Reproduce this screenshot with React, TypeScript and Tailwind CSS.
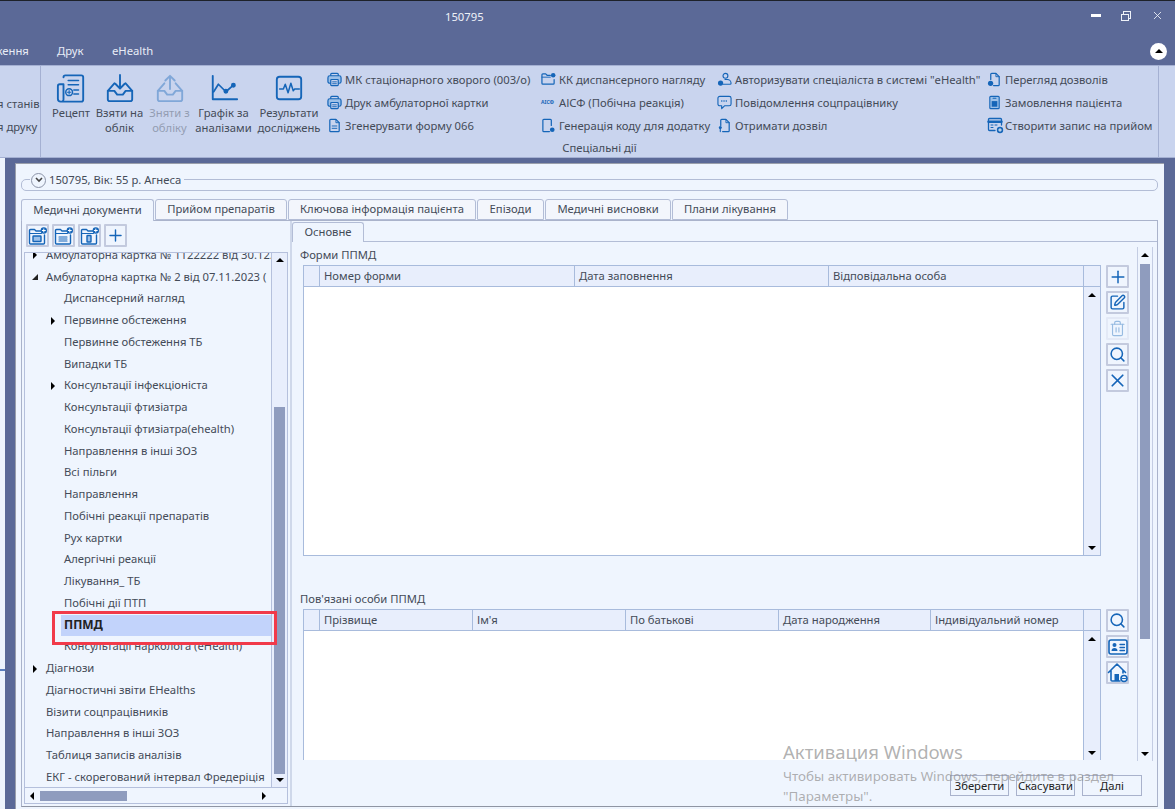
import { Plus, Search, X, Trash2, SquarePen } from 'lucide-react';
import type { ReactNode } from 'react';

const Svg = ({ size, vb = 24, children, sw = 1.6 }: { size: number; vb?: number; children: ReactNode; sw?: number }) => (
  <svg width={size} height={size} viewBox={`0 0 ${vb} ${vb}`} fill="none" stroke="currentColor" strokeWidth={sw} strokeLinecap="round" strokeLinejoin="round" className="shrink-0">
    {children}
  </svg>
);

// ribbon large icons
const RecipeIcon = () => (
  <Svg size={30} vb={32} sw={2}>
    <path d="M8 4.500a2 2 0 0 1 2-2h17a2 2 0 0 1 2 2v24a2 2 0 0 1-2 2H5a3 3 0 0 1-3-3V14a2 2 0 0 1 2-2h4v15.500a2.500 2.500 0 0 1-2.500 3" />
    <path d="M13 8h11M13 12.500h11M19 18h5M19 22.500h5" strokeWidth={1.6} />
    <circle cx="14" cy="20.500" r="3.600" strokeWidth={1.6} />
    <path d="M14 18.800v3.400M12.300 20.500h3.400" strokeWidth={1.2} />
  </Svg>
);
const InboxIcon = ({ up }: { up?: boolean }) => (
  <Svg size={30} vb={32} sw={2}>
    <path d="M10 11 3 19v9a2 2 0 0 0 2 2h22a2 2 0 0 0 2-2v-9l-7-8" />
    <path d="M3 19h7l3 4h6l3-4h7" />
    {up ? <path d="M16 17V3M11 8l5-5 5 5" /> : <path d="M16 2v14M11 11.500l5 5 5-5" />}
  </Svg>
);
const ChartIcon = () => (
  <Svg size={30} vb={32} sw={2}>
    <path d="M4 3v25h26" />
    <path d="M5 20l5-8 8 8 8-7" strokeWidth={1.8} />
    <circle cx="18" cy="19.500" r="1.600" fill="currentColor" />
    <circle cx="26" cy="13" r="1.600" fill="currentColor" />
  </Svg>
);
const MonitorIcon = () => (
  <Svg size={30} vb={32} sw={2}>
    <rect x="3" y="4" width="26" height="24" rx="3" />
    <path d="M6 17h4l2-5 3 9 3-10 2.500 8 1.500-2h5" strokeWidth={1.6} />
  </Svg>
);

// ribbon small icons
const PrinterIcon = () => (
  <Svg size={15} vb={16} sw={1.3}>
    <path d="M4 4V2.500a1 1 0 0 1 1-1h6a1 1 0 0 1 1 1V4" />
    <rect x="1" y="4" width="14" height="8" rx="2" fill="#9cc0e8" />
    <rect x="4" y="8" width="8" height="6.500" rx=".8" fill="#c9d4ee" />
    <path d="M6 10.500h4M6 12.500h4" strokeWidth={1} />
  </Svg>
);
const DocIcon = () => (
  <Svg size={15} vb={16} sw={1.3}>
    <path d="M4 1.500h5.500L13 5v8.500a1 1 0 0 1-1 1H4a1 1 0 0 1-1-1v-11a1 1 0 0 1 1-1Z" />
    <path d="M9.500 1.500V5H13M5.500 8.500h5M5.500 11h5" strokeWidth={1} />
  </Svg>
);
const FolderDot = () => (
  <Svg size={15} vb={16} sw={1.3}>
    <path d="M10 3.500H6.500L5 2H2a1 1 0 0 0-1 1v9a1 1 0 0 0 1 1h11a1 1 0 0 0 1-1V8" />
    <path d="M1 5.500h9" strokeWidth={1} />
    <circle cx="13" cy="3.500" r="2.400" fill="currentColor" stroke="none" />
  </Svg>
);
const PhoneDot = () => (
  <Svg size={15} vb={16} sw={1.3}>
    <path d="M9 14.500H3a1 1 0 0 1-1-1v-11a1 1 0 0 1 1-1h7a1 1 0 0 1 1 1V8" />
    <circle cx="12" cy="12.500" r="2.500" fill="currentColor" stroke="none" />
  </Svg>
);
const UsersIcon = () => (
  <Svg size={15} vb={16} sw={1.2}>
    <circle cx="9" cy="4" r="2.600" />
    <path d="M6.500 13h7.500a1 1 0 0 0 1-1 4 4 0 0 0-4-4H8.500" />
    <circle cx="3.800" cy="11.800" r="2.800" fill="currentColor" stroke="none" />
  </Svg>
);
const ChatIcon = () => (
  <Svg size={15} vb={16} sw={1.2}>
    <path d="M3 1.500h10a2 2 0 0 1 2 2v6a2 2 0 0 1-2 2H8l-3 3v-3H3a2 2 0 0 1-2-2v-6a2 2 0 0 1 2-2Z" />
    <path d="M4.500 6.500h7" strokeWidth={1.6} strokeDasharray="1.2 1.2" strokeLinecap="butt" />
  </Svg>
);
const DocPin = () => (
  <Svg size={15} vb={16} sw={1.3}>
    <path d="M6 14.500h6a1 1 0 0 0 1-1V5L9.500 1.500H5a1 1 0 0 0-1 1V8" />
    <path d="M9.500 1.500V5H13" strokeWidth={1} />
    <path d="M3.500 10v4.500" strokeWidth={1.2} />
    <circle cx="3.500" cy="10" r="1.600" fill="currentColor" stroke="none" />
  </Svg>
);
const DocDot = () => (
  <Svg size={15} vb={16} sw={1.3}>
    <path d="M7 14.500h5a1 1 0 0 0 1-1V5L9.500 1.500H5a1 1 0 0 0-1 1V8" />
    <path d="M9.500 1.500V5H13" strokeWidth={1} />
    <circle cx="3.800" cy="12" r="2.800" fill="currentColor" stroke="none" />
  </Svg>
);
const OrderIcon = () => (
  <Svg size={15} vb={16} sw={1.2}>
    <rect x="3" y="1.500" width="10" height="13" rx="1" fill="#9cc0e8" />
    <rect x="5" y="6.500" width="6" height="6" fill="currentColor" stroke="none" />
    <path d="M6.500 3.500h3" />
  </Svg>
);
const CalendarPlus = () => (
  <Svg size={17} vb={17} sw={1.3}>
    <path d="M8 13.500H2.500a1 1 0 0 1-1-1v-10a1 1 0 0 1 1-1h11a1 1 0 0 1 1 1V8" />
    <path d="M1.500 4.800h13" strokeWidth={2.4} />
    <path d="M4 8h2M8 8h2M4 10.500h2" strokeWidth={1} />
    <circle cx="13" cy="13" r="3.200" fill="currentColor" stroke="none" />
    <path d="M13 11.600v2.800M11.600 13h2.800" stroke="#fff" strokeWidth={.9} />
  </Svg>
);
const AicfIcon = () => (
  <span className="w-[15px] text-[5px] font-bold leading-none text-[#1565b8] whitespace-nowrap">AICФ</span>
);

// tree toolbar folder with plus dot
const FolderBtnIcon = ({ kind }: { kind: 'card' | 'lines' | 'doc' }) => (
  <Svg size={20} vb={20} sw={1.4}>
    <path d="M13 5H8L6.500 3.500H2.500a1 1 0 0 0-1 1V17a1 1 0 0 0 1 1h13a1 1 0 0 0 1-1V9" />
    <path d="M1.500 7.500h12" strokeWidth={1} />
    {kind === 'card' && <rect x="5" y="10" width="8" height="5.500" rx=".6" fill="#9cc0e8" />}
    {kind === 'lines' && <path d="M5 11h8M5 13h8M5 15h8" strokeWidth={1.1} />}
    {kind === 'doc' && <rect x="7" y="9.500" width="4" height="6.500" rx=".6" fill="#9cc0e8" />}
    <circle cx="15.800" cy="4.500" r="3.200" fill="currentColor" stroke="none" />
    <path d="M15.800 3v3M14.300 4.500h3" stroke="#fff" strokeWidth={1} />
  </Svg>
);

const IdCardIcon = () => (
  <Svg size={20} vb={20} sw={1.6}>
    <rect x="1" y="3" width="18" height="14" rx="2" />
    <circle cx="6.500" cy="8" r="2" fill="currentColor" stroke="none" />
    <path d="M3.500 14c0-2 1.200-3 3-3s3 1 3 3Z" fill="currentColor" stroke="none" />
    <path d="M12 7.500h4.500M12 10.500h4.500M12 13.500h4.500" strokeWidth={1.3} />
  </Svg>
);
const HomeIcon = () => (
  <Svg size={21} vb={21} sw={1.6}>
    <path d="M1.500 10.500 10 2l8.500 8.500M4 8.500V18a1 1 0 0 0 1 1h8M16 8v3" />
    <rect x="7.500" y="12" width="4.500" height="7" fill="currentColor" stroke="none" />
    <circle cx="17" cy="16.500" r="3" fill="#eff5fe" />
    <path d="M15.500 16.500h3" strokeWidth={1.2} />
  </Svg>
);

const Arrow = ({ dir }: { dir: 'up' | 'down' | 'left' | 'right' }) => {
  const cls = {
    up: 'border-x-[4.5px] border-b-[4px] border-x-transparent border-b-black',
    down: 'border-x-[4.5px] border-t-[4px] border-x-transparent border-t-black',
    left: 'border-y-[4.5px] border-r-[4px] border-y-transparent border-r-black',
    right: 'border-y-[4.5px] border-l-[4px] border-y-transparent border-l-black',
  }[dir];
  return <span className={`block w-0 h-0 ${cls}`} />;
};

const IconBtn = ({ children, disabled }: { children: ReactNode; disabled?: boolean }) => (
  <button className={`w-[23px] h-[23px] flex items-center justify-center border-2 rounded-[1px] text-[#1565b8] ${disabled ? 'border-[#e3e9f6]' : 'border-[#c3cade]'}`}>
    <span className={disabled ? 'opacity-40' : ''}>{children}</span>
  </button>
);

const BigBtn = ({ icon, lines, w, disabled }: { icon: ReactNode; lines: string[]; w: number; disabled?: boolean }) => (
  <div style={{ width: w }} className={`flex flex-col items-center shrink-0 pt-[7px] leading-[15px] ${disabled ? 'opacity-40' : ''}`}>
    <div className="h-[30px] text-[#1565b8]">{icon}</div>
    <div className="mt-[2px] text-center whitespace-nowrap">
      {lines.map(l => <div key={l}>{l}</div>)}
    </div>
  </div>
);

const smallCols: { w: number; items: [ReactNode, string][] }[] = [
  { w: 214, items: [[<PrinterIcon />, 'МК стаціонарного хворого (003/о)'], [<PrinterIcon />, 'Друк амбулаторної картки'], [<DocIcon />, 'Згенерувати форму 066']] },
  { w: 176, items: [[<FolderDot />, 'КК диспансерного нагляду'], [<AicfIcon />, 'АІСФ (Побічна реакція)'], [<PhoneDot />, 'Генерація коду для додатку']] },
  { w: 270, items: [[<UsersIcon />, 'Авторизувати спеціаліста в системі "eHealth"'], [<ChatIcon />, 'Повідомлення соцпрацівнику'], [<DocPin />, 'Отримати дозвіл']] },
  { w: 172, items: [[<DocDot />, 'Перегляд дозволів'], [<OrderIcon />, 'Замовлення пацієнта'], [<CalendarPlus />, 'Створити запис на прийом']] },
];

const tabs: [string, number][] = [
  ['Медичні документи', 133],
  ['Прийом препаратів', 132],
  ['Ключова інформація пацієнта', 188],
  ['Епізоди', 67],
  ['Медичні висновки', 126],
  ['Плани лікування', 116],
];

type Row = { t: string; lvl: 0 | 1; arrow?: 'right' | 'open'; sel?: boolean };
const rows: Row[] = [
  { t: 'Амбулаторна картка № 1122222 від 30.12.2023', lvl: 0, arrow: 'right' },
  { t: 'Амбулаторна картка № 2 від 07.11.2023 (', lvl: 0, arrow: 'open' },
  { t: 'Диспансерний нагляд', lvl: 1 },
  { t: 'Первинне обстеження', lvl: 1, arrow: 'right' },
  { t: 'Первинне обстеження ТБ', lvl: 1 },
  { t: 'Випадки ТБ', lvl: 1 },
  { t: 'Консультації інфекціоніста', lvl: 1, arrow: 'right' },
  { t: 'Консультації фтизіатра', lvl: 1 },
  { t: 'Консультації фтизіатра(ehealth)', lvl: 1 },
  { t: 'Направлення в інші ЗОЗ', lvl: 1 },
  { t: 'Всі пільги', lvl: 1 },
  { t: 'Направлення', lvl: 1 },
  { t: 'Побічні реакції препаратів', lvl: 1 },
  { t: 'Рух картки', lvl: 1 },
  { t: 'Алергічні реакції', lvl: 1 },
  { t: 'Лікування_ ТБ', lvl: 1 },
  { t: 'Побічні дії ПТП', lvl: 1 },
  { t: 'ППМД', lvl: 1, sel: true },
  { t: 'Консультації нарколога (eHealth)', lvl: 1 },
  { t: 'Діагнози', lvl: 0, arrow: 'right' },
  { t: 'Діагностичні звіти EHealths', lvl: 0 },
  { t: 'Візити соцпрацівників', lvl: 0 },
  { t: 'Направлення в інші ЗОЗ', lvl: 0 },
  { t: 'Таблиця записів аналізів', lvl: 0 },
  { t: 'ЕКГ - скорегований інтервал Фредеріція', lvl: 0 },
];

const TreeRow = ({ r }: { r: Row }) => (
  <div className={`h-[21.75px] flex items-center whitespace-nowrap ${r.lvl === 1 ? 'pl-[39px]' : 'pl-[21px]'}`}>
    <span className="w-[3px] -ml-[13px] mr-[10px] flex justify-center">
      {r.arrow === 'right' && <span className="block shrink-0 w-0 h-0 border-y-[4px] border-l-[4px] border-y-transparent border-l-black" />}
      {r.arrow === 'open' && <span className="block shrink-0 w-0 h-0 border-b-[6px] border-l-[6px] border-l-transparent border-b-[#222]" />}
    </span>
    <span className={`h-[21px] flex-1 flex items-center ${r.sel ? '-ml-[3px] pl-[3px] bg-[#c2d3fb] font-bold text-[12px] text-[#222]' : ''}`}>{r.t}</span>
  </div>
);

const Table = ({ cols, h, closed }: { cols: [string, number][]; h: number; closed?: boolean }) => (
  <div style={{ height: h }} className={`w-[798px] flex flex-col border-x border-t border-[#a8bbdc] ${closed ? 'border-b' : ''}`}>
    <div className="h-[21px] shrink-0 flex bg-[#e8eefc] border-b border-[#a8bbdc]">
      <div className="w-[16px] border-r border-[#a8bbdc]" />
      {cols.map(([t, w]) => (
        <div key={t} style={{ width: w }} className="border-r border-[#a8bbdc] pl-[4px] leading-[20px] whitespace-nowrap">{t}</div>
      ))}
    </div>
    <div className="flex-1 flex min-h-0">
      <div className="flex-1 bg-white" />
      <div className="w-[17px] bg-[#e8eefc] border-l border-[#a8bbdc] flex flex-col items-center justify-between pt-[6px] pb-[5px]">
        <Arrow dir="up" />
        <Arrow dir="down" />
      </div>
    </div>
  </div>
);

export default function App() {
  return (
    <div className="relative w-[1175px] h-[809px] overflow-hidden bg-[#5b6997] text-[11.25px] text-[#444b58] font-['Noto_Sans','Open_Sans',sans-serif]">
      {/* title bar */}
      <div className="h-[33px] border-t border-[#1d2129] flex items-center text-[#eef1f8]">
        <span className="ml-[445px] mt-[1px]">150795</span>
        <div className="ml-auto flex items-center gap-[20px] pr-[11px] mt-[-3px]">
          <span className="block w-[10px] h-[2.5px] bg-white" />
          <span className="relative block w-[10px] h-[10px]">
            <span className="absolute right-0 top-0 w-[8px] h-[8px] border border-[#eef1f8]" />
            <span className="absolute left-0 bottom-0 w-[8px] h-[7px] border-[1.5px] border-[#eef1f8] bg-[#5b6997]" />
          </span>
          <X size={13} strokeWidth={1.6} />
        </div>
      </div>
      {/* ribbon tabs */}
      <div className="h-[32px] flex items-center text-[#e8ecf6] overflow-hidden pt-[4px]">
        <span className="-ml-[6px] w-[63px] shrink-0">ження</span>
        <span className="w-[55px] shrink-0">Друк</span>
        <span>eHealth</span>
        <span className="ml-auto mr-[8px] w-[17px] h-[17px] rounded-full bg-white flex items-center justify-center">
          <Arrow dir="up" />
        </span>
      </div>
      {/* ribbon */}
      <div className="h-[93px] flex bg-[#c9d4ee] border-y border-[#a4b0d2] leading-[15px]">
        <div className="w-[41px] shrink-0 border-r border-[#a4b0d2] overflow-hidden pt-[30px] whitespace-nowrap">
          <div className="-ml-[3px] h-[23px]">я станів</div>
          <div className="-ml-[3px]">я друку</div>
        </div>
        <div className="w-[1118px] shrink-0 flex flex-col border-r border-[#a4b0d2]">
          <div className="h-[74px] flex">
            <div className="ml-[6px]" />
            <BigBtn w={48} icon={<RecipeIcon />} lines={['Рецепт']} />
            <BigBtn w={49} icon={<InboxIcon />} lines={['Взяти на', 'облік']} />
            <BigBtn w={51} icon={<InboxIcon up />} lines={['Зняти з', 'обліку']} disabled />
            <BigBtn w={57} icon={<ChartIcon />} lines={['Графік за', 'аналізами']} />
            <BigBtn w={74} icon={<MonitorIcon />} lines={['Результати', 'досліджень']} />
            {smallCols.map(c => (
              <div key={c.items[0][1]} style={{ width: c.w }} className="shrink-0 pt-[2px] flex flex-col">
                {c.items.map(([icon, t]) => (
                  <div key={t} className="h-[23px] flex items-center whitespace-nowrap">
                    <span className="w-[19px] pl-[1px] text-[#1565b8] flex items-center shrink-0">{icon}</span>
                    {t}
                  </div>
                ))}
              </div>
            ))}
          </div>
          <div className="text-center leading-[15px]">Спеціальні дії</div>
        </div>
      </div>
      {/* lower area */}
      <div className="flex h-[651px]">
        <div className="w-[5px] shrink-0 bg-[#eef4fd] pt-[511px]">
          <div className="h-[2px] bg-[#5c7fbe]" />
        </div>
        <div className="w-[10px] shrink-0" />
        {/* dialog */}
        <div className="mt-[5px] w-[1149px] shrink-0 bg-[#eff5fe] border-l border-t border-[#9a9fab] pl-[5px] pr-[6px]">
          {/* patient group box */}
          <div className="relative mt-[15px] h-[12px] border border-[#b3bdd6] rounded-[5px]">
            <div className="absolute left-[8px] -top-[9px] h-[18px] flex items-center gap-[3px] bg-[#eff5fe] px-[1px]">
              <span className="w-[15px] h-[15px] rounded-full border border-[#8b93a8] flex items-center justify-center">
                <svg width="8" height="6" viewBox="0 0 8 6" fill="none" stroke="#444" strokeWidth="1.6"><path d="M1 1l3 3 3-3" /></svg>
              </span>
              <span className="pr-[2px]">150795, Вік: 55 р. Агнеса</span>
            </div>
          </div>
          {/* main tabs */}
          <div className="mt-[8px] h-[21px] flex gap-px relative z-10">
            {tabs.map(([t, w], i) => (
              <div key={t} style={{ width: w }} className={`flex items-center justify-center whitespace-nowrap border border-[#b3bdd6] rounded-t-[3px] ${i === 0 ? 'h-[22px] border-b-0 bg-[#eff5fe]' : 'bg-[#f3f6fc]'}`}>{t}</div>
            ))}
          </div>
          <div className="h-[587px] flex border border-[#aab3cb] border-b-[#8f95a3]">
            {/* left: tree */}
            <div className="w-[268px] shrink-0 flex flex-col">
              <div className="h-[31px] shrink-0 flex items-start pl-[4px] pt-[3px] gap-[3px] text-[#1565b8]">
                <IconBtn><FolderBtnIcon kind="card" /></IconBtn>
                <IconBtn><FolderBtnIcon kind="lines" /></IconBtn>
                <IconBtn><FolderBtnIcon kind="doc" /></IconBtn>
                <IconBtn><Plus size={19} strokeWidth={1.8} /></IconBtn>
              </div>
              <div className="ml-[2px] w-[264px] h-[552px] flex flex-col border border-[#b5c0dc]">
                <div className="flex-1 min-h-0 flex">
                  <div className="flex-1 overflow-hidden">
                    <div className="-mt-[8.5px]">
                      {rows.map((r, i) => <TreeRow key={i} r={r} />)}
                    </div>
                  </div>
                  <div className="w-[16px] shrink-0 flex flex-col items-center border-l border-[#b5c0dc] bg-[#e8eefc] pt-[5px] pb-[5px]">
                    <Arrow dir="up" />
                    <div className="flex-1 w-full flex flex-col justify-end px-[2px] pb-[4px]">
                      <div className="h-[367px] bg-[#8f9cbe]" />
                    </div>
                    <Arrow dir="down" />
                  </div>
                </div>
                <div className="h-[16px] shrink-0 flex items-center border-t border-[#b5c0dc] pl-[5px] pr-[21px] bg-[#eff5fe]">
                  <Arrow dir="left" />
                  <div className="ml-[6px] w-[87px] h-[10px] bg-[#8f9cbe]" />
                  <span className="ml-auto"><Arrow dir="right" /></span>
                </div>
              </div>
            </div>
            {/* right pane */}
            <div className="flex-1 flex flex-col border-l-2 border-[#cfd8ea] min-w-0">
              <div className="h-[21px] shrink-0 flex items-end border-b border-[#b3bdd6]">
                <div className="w-[72px] h-[20px] flex items-center justify-center border border-b-0 border-[#b3bdd6] rounded-t-[3px] -mb-px bg-[#eff5fe]">Основне</div>
              </div>
              <div className="h-[519px] shrink-0 flex overflow-hidden">
                <div className="w-[845px] shrink-0 pl-[8px] pt-[5px]">
                  <div className="h-[16px] leading-[16px]">Форми ППМД</div>
                  <div className="ml-[3px] mt-[2px] flex items-start">
                    <Table h={291} closed cols={[['Номер форми', 255], ['Дата заповнення', 254], ['Відповідальна особа', 255]]} />
                    <div className="ml-[5px] flex flex-col gap-[3px]">
                      <IconBtn><Plus size={20} strokeWidth={1.8} /></IconBtn>
                      <IconBtn><SquarePen size={17} strokeWidth={2} /></IconBtn>
                      <IconBtn disabled><Trash2 size={17} strokeWidth={1.6} /></IconBtn>
                      <IconBtn><Search size={17} strokeWidth={2.2} /></IconBtn>
                      <IconBtn><X size={21} strokeWidth={2} /></IconBtn>
                    </div>
                  </div>
                  <div className="mt-[35px] h-[16px] leading-[16px]">Пов'язані особи ППМД</div>
                  <div className="ml-[3px] mt-[2px] flex items-start">
                    <Table h={151} cols={[['Прізвище', 153], ["Ім'я", 153], ['По батькові', 153], ['Дата народження', 152], ['Індивідуальний номер', 153]]} />
                    <div className="ml-[5px] flex flex-col gap-[3px]">
                      <IconBtn><Search size={17} strokeWidth={2.2} /></IconBtn>
                      <IconBtn><IdCardIcon /></IconBtn>
                      <IconBtn><HomeIcon /></IconBtn>
                    </div>
                  </div>
                </div>
                {/* outer scrollbar */}
                <div className="mt-[5px] w-[16px] shrink-0 flex flex-col items-center border-x border-[#c4cde3] pt-[6px] pb-[5px]">
                  <Arrow dir="up" />
                  <div className="flex-1 w-full px-[2px] pt-[7px]">
                    <div className="h-[375px] bg-[#8f9cbe]" />
                  </div>
                  <Arrow dir="down" />
                </div>
              </div>
              <div className="flex-1 flex items-start justify-end gap-[7px] pt-[14px] pr-[15px] text-[#222]">
                <button className="w-[59px] h-[21px] border border-[#a9b2cc] leading-[19px]">Зберегти</button>
                <button className="w-[59px] h-[21px] border border-[#a9b2cc] leading-[19px]">Скасувати</button>
                <button className="w-[60px] h-[21px] border border-[#a9b2cc] leading-[19px]">Далі</button>
              </div>
            </div>
          </div>
        </div>
      </div>
      {/* selection marker drawn over the tree */}
      <div className="absolute left-[52px] top-[611px] w-[225px] h-[34px] border-[3px] border-[#f13a4a]" />
      {/* windows watermark */}
      <div className="absolute left-[783px] top-[740px] text-[#8f8f8f]/70 pointer-events-none">
        <div className="text-[18.5px] leading-[24px]">Активация Windows</div>
        <div className="text-[13.4px] leading-[20px] mt-[2px] w-[350px]">Чтобы активировать Windows, перейдите в раздел "Параметры".</div>
      </div>
    </div>
  );
}
